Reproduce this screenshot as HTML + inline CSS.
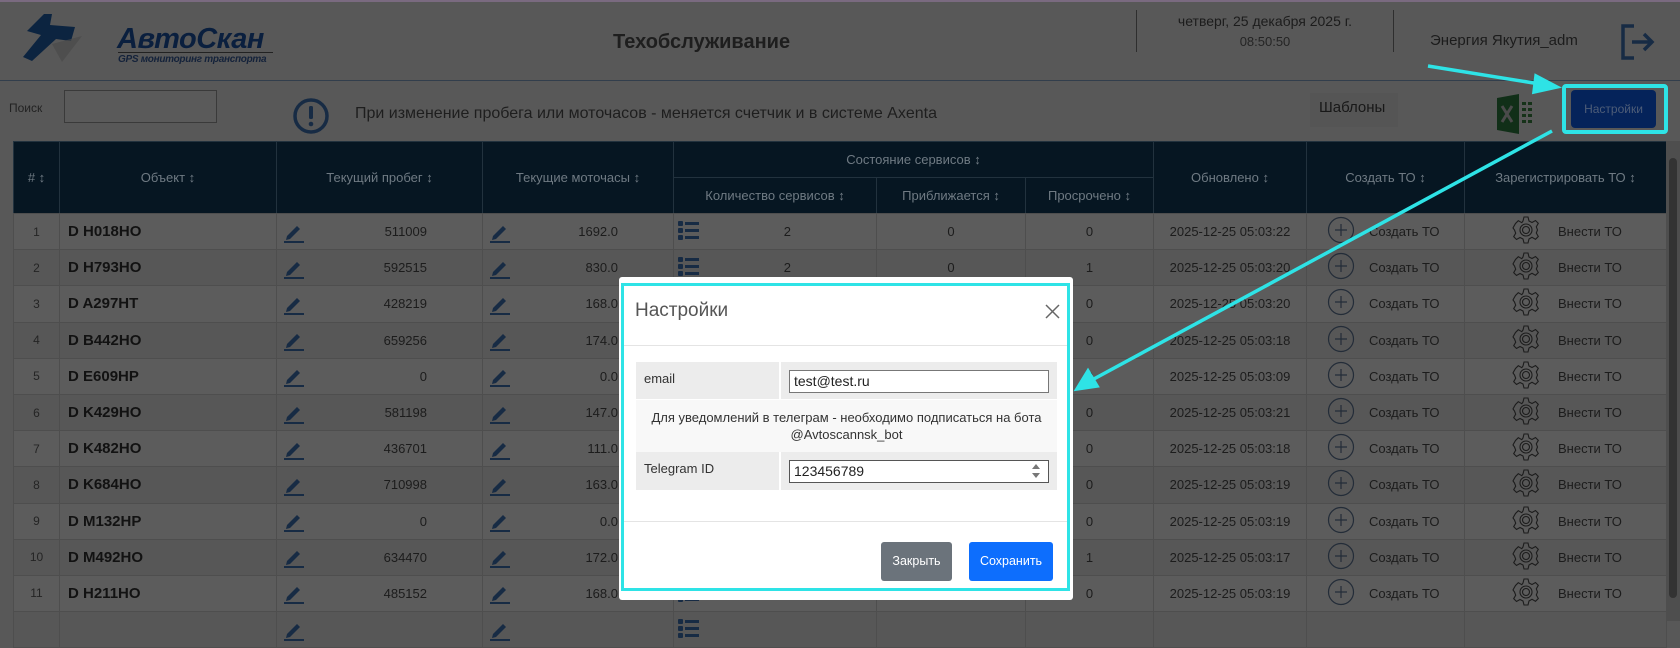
<!DOCTYPE html>
<html><head><meta charset="utf-8"><style>
*{box-sizing:border-box;margin:0;padding:0}
body{width:1680px;height:621px;overflow:hidden;background:#585858;font-family:"Liberation Sans","DejaVu Sans",sans-serif;position:relative;color:#1c1c1c}
.abs{position:absolute}
table{position:absolute;left:13px;top:141px;border-collapse:collapse;table-layout:fixed;width:1653px}
th{background:#061622;color:#6f7a83;font-weight:normal;font-size:13px;border:1px solid #22323e;height:36px}
td{height:36.2px;font-size:13px;border:1px solid #4e4e4e;color:#1c1c1c;text-align:center;white-space:nowrap;overflow:hidden}
tr.r:nth-child(odd) td{background:#5c5c5c}
tr.r:nth-child(even) td{background:#575757}
.nm{text-align:left;padding-left:8px;font-size:15px;font-weight:bold;color:#121212}
.num{text-align:left;padding-left:6px;position:relative}
.num span{position:absolute;right:55px;top:10px}
.pen{display:inline-block;vertical-align:middle}
</style></head><body>
<div class="abs" style="left:0;top:0;width:1680px;height:2px;background:#7a6a80"></div>
<svg class="abs" style="left:20px;top:12px" width="75" height="52" viewBox="0 0 75 52">
<path d="M24 2 L32 2 L30 13 L55 15 L51 29 L36 27 L12 49 L3 45 L21 23 L7 19 Z" fill="#0c2440"/>
<path d="M32 32 L62 24 L42 50 Z" fill="#4a4a4a" opacity=".7"/>
</svg>
<div class="abs" style="left:117px;top:23px;font-size:29px;font-weight:bold;font-style:italic;color:#0a1f3e;letter-spacing:-0.5px">АвтоСкан</div>
<div class="abs" style="left:118px;top:52px;width:155px;height:1px;background:#222"></div>
<div class="abs" style="left:118px;top:54px;font-size:10px;font-weight:bold;font-style:italic;color:#14223a;letter-spacing:-0.3px">GPS мониторинг транспорта</div>
<div class="abs" style="left:613px;top:31px;font-size:20px;font-weight:bold;color:#1e1e1e">Техобслуживание</div>
<div class="abs" style="left:1136px;top:10px;width:1px;height:42px;background:#2e2e2e"></div>
<div class="abs" style="left:1393px;top:10px;width:1px;height:42px;background:#2e2e2e"></div>
<div class="abs" style="left:1140px;top:13px;width:250px;text-align:center;font-size:14px;color:#1c1c1c">четверг, 25 декабря 2025 г.</div>
<div class="abs" style="left:1140px;top:34px;width:250px;text-align:center;font-size:13px;color:#242424">08:50:50</div>
<div class="abs" style="left:1430px;top:32px;font-size:15px;color:#1c1c1c">Энергия Якутия_adm</div>
<svg class="abs" style="left:1620px;top:24px" width="36" height="36" viewBox="0 0 36 36" fill="none" stroke="#172b44" stroke-width="3.5">
<path d="M14 2 H3 V34 H14"/><path d="M12 18 H32 M24 10 L32 18 L24 26"/></svg>
<div class="abs" style="left:0;top:80px;width:1680px;height:1px;background:#323e4c"></div>
<div class="abs" style="left:9px;top:101px;font-size:12px;color:#222">Поиск</div>
<div class="abs" style="left:64px;top:90px;width:153px;height:33px;border:1px solid #3a3a3a;background:#5a5a5a"></div>
<svg class="abs" style="left:292px;top:97px" width="38" height="38" viewBox="0 0 38 38"><circle cx="19" cy="19" r="16" fill="none" stroke="#172b44" stroke-width="3.5"/><rect x="17" y="9" width="4" height="13" rx="1.5" fill="#172b44"/><circle cx="19" cy="27" r="2.3" fill="#172b44"/></svg>
<div class="abs" style="left:355px;top:105px;font-size:16px;color:#1e1e1e">При изменение пробега или моточасов - меняется счетчик и в системе Axenta</div>
<div class="abs" style="left:1310px;top:93px;width:88px;height:34px;background:#555"></div>
<div class="abs" style="left:1319px;top:99px;font-size:15px;color:#181818">Шаблоны</div>
<svg class="abs" style="left:1497px;top:92px" width="42" height="44" viewBox="0 0 42 44"><path d="M0 6 L22 2 V42 L0 38 Z" fill="#112f18"/><path d="M5 14 L15 30 M15 14 L5 30" stroke="#4a4a4a" stroke-width="3"/><g fill="#163219"><rect x="25" y="10" width="4" height="3"/><rect x="31" y="10" width="4" height="3"/><rect x="25" y="16" width="4" height="3"/><rect x="31" y="16" width="4" height="3"/><rect x="25" y="22" width="4" height="3"/><rect x="31" y="22" width="4" height="3"/><rect x="25" y="28" width="4" height="3"/><rect x="31" y="28" width="4" height="3"/></g></svg>
<div class="abs" style="left:1562px;top:84px;width:106px;height:50px;border:4px solid #2ee3e6;border-radius:4px"></div>
<div class="abs" style="left:1571px;top:90px;width:85px;height:38px;background:#05235a;border-radius:4px;color:#4e5d78;font-size:12px;text-align:center;line-height:38px">Настройки</div>
<table>
<colgroup><col style="width:46px"><col style="width:217px"><col style="width:206px"><col style="width:191px"><col style="width:203px"><col style="width:149px"><col style="width:128px"><col style="width:153px"><col style="width:158px"><col style="width:202px"></colgroup>
<tr><th rowspan="2"># ↕</th><th rowspan="2">Объект ↕</th><th rowspan="2">Текущий пробег ↕</th><th rowspan="2">Текущие моточасы ↕</th><th colspan="3">Состояние сервисов ↕</th><th rowspan="2">Обновлено ↕</th><th rowspan="2">Создать ТО ↕</th><th rowspan="2">Зарегистрировать ТО ↕</th></tr>
<tr><th>Количество сервисов ↕</th><th>Приближается ↕</th><th>Просрочено ↕</th></tr>
</table>
<div id="rows"></div>
<script>
var d=[["D H018HO","511009","1692.0","2","0","0","05:03:22"],["D H793HO","592515","830.0","2","0","1","05:03:20"],["D A297HT","428219","168.0","2","0","0","05:03:20"],["D B442HO","659256","174.0","2","0","0","05:03:18"],["D E609HP","0","0.0","2","0","0","05:03:09"],["D K429HO","581198","147.0","2","0","0","05:03:21"],["D K482HO","436701","111.0","2","0","0","05:03:18"],["D K684HO","710998","163.0","2","0","0","05:03:19"],["D M132HP","0","0.0","2","0","0","05:03:19"],["D M492HO","634470","172.0","2","0","1","05:03:17"],["D H211HO","485152","168.0","2","0","0","05:03:19"],["","","","","","",""]];
var pen='<svg class="pen" width="22" height="22" viewBox="0 0 22 22"><path d="M4 15 L14 5 L17 8 L7 18 L3 19 Z" fill="#172b44"/><rect x="1" y="20" width="20" height="2" fill="#172b44"/></svg>';
var lst='<svg width="22" height="22" viewBox="0 0 22 22" fill="#172b44"><rect x="0" y="1" width="5" height="5" rx="1"/><rect x="0" y="8" width="5" height="5" rx="1"/><rect x="0" y="15" width="5" height="5" rx="1"/><rect x="7" y="2" width="14" height="3"/><rect x="7" y="9" width="14" height="3"/><rect x="7" y="16" width="14" height="3"/></svg>';
var pl='<svg width="28" height="28" viewBox="0 0 28 28" fill="none" stroke="#232c38" stroke-width="1.2"><circle cx="14" cy="14" r="12.5"/><path d="M14 8 V20 M8 14 H20"/></svg>';
var gr='<svg width="28" height="28" viewBox="0 0 28 28" fill="none" stroke="#1c1c1c" stroke-width="1.1"><path d="M12 1h4l1 4 3 1.5 3.5-2 2.8 2.8-2 3.5L25.5 14l-1.2 3 2 3.5-2.8 2.8-3.5-2L17 23l-1 4h-4l-1-4-3-1.5-3.5 2-2.8-2.8 2-3.5L2.5 14 1 12l.5-1 2-3.5L6.3 4.7l3.5 2L11 5z"/><circle cx="14" cy="14" r="6"/><circle cx="14" cy="14" r="3.5"/></svg>';
var h='<table style="top:213px"><colgroup><col style="width:46px"><col style="width:217px"><col style="width:206px"><col style="width:191px"><col style="width:203px"><col style="width:149px"><col style="width:128px"><col style="width:153px"><col style="width:158px"><col style="width:202px"></colgroup>';
d.forEach(function(r,i){var e=r[0]==="";h+='<tr class="r"><td style="color:#242424;font-size:12px">'+(e?'':i+1)+'</td><td class="nm">'+r[0]+'</td><td class="num">'+pen+'<span>'+r[1]+'</span></td><td class="num">'+pen+'<span>'+r[2]+'</span></td><td class="num"><span style="left:4px;top:6px;right:auto">'+lst+'</span><span style="right:85px">'+r[3]+'</span></td><td>'+r[4]+'</td><td>'+r[5]+'</td><td>'+(e?'':'2025-12-25 '+r[6])+'</td><td style="text-align:left;padding-left:20px">'+(e?'':'<span style="display:inline-block;vertical-align:middle">'+pl+'</span><span style="margin-left:14px;vertical-align:middle">Создать ТО</span>')+'</td><td style="text-align:left;padding-left:47px">'+(e?'':'<span style="display:inline-block;vertical-align:middle">'+gr+'</span><span style="margin-left:18px;vertical-align:middle">Внести ТО</span>')+'</td></tr>';});
document.getElementById('rows').innerHTML=h+'</table>';
</script>
<div class="abs" style="left:1666px;top:141px;width:14px;height:480px;background:#4e4e4e"></div>
<div class="abs" style="left:1669px;top:158px;width:8px;height:440px;background:#333;border-radius:4px"></div>
<svg class="abs" style="left:0;top:0" width="1680" height="621">
<g stroke="#2ee3e6" stroke-width="3.5" fill="#2ee3e6">
<line x1="1428" y1="66" x2="1540" y2="84"/><path d="M1557 87 L1536 76 L1534 92 Z"/>
<line x1="1552" y1="131" x2="1092" y2="380"/><path d="M1077 389 L1088 371 L1097 386 Z"/>
</g></svg>
<div class="abs" style="left:619px;top:277px;width:454px;height:323px;background:#fff;border-radius:3px"></div>
<div class="abs" style="left:621px;top:283px;width:449px;height:308px;border:3px solid #2ee3e6"></div>
<div class="abs" style="left:635px;top:300px;font-size:19px;color:#555">Настройки</div>
<svg class="abs" style="left:1045px;top:304px" width="15" height="15" viewBox="0 0 15 15"><path d="M1 1 L14 14 M14 1 L1 14" stroke="#666" stroke-width="1.5"/></svg>
<div class="abs" style="left:624px;top:345px;width:443px;height:1px;background:#e4e4e4"></div>
<div class="abs" style="left:636px;top:362px;width:143px;height:37px;background:#ececec"></div>
<div class="abs" style="left:781px;top:362px;width:276px;height:37px;background:#ececec"></div>
<div class="abs" style="left:644px;top:371px;font-size:13px;color:#333">email</div>
<div class="abs" style="left:789px;top:370px;width:260px;height:23px;border:1px solid #777;background:#fff;font-size:14px;padding:2px 4px;color:#222">test@test.ru</div>
<div class="abs" style="left:636px;top:400px;width:421px;height:52px;background:#f8f8f8;text-align:center;font-size:13px;color:#333;line-height:17px;padding-top:9px">Для уведомлений в телеграм - необходимо подписаться на бота<br>@Avtoscannsk_bot</div>
<div class="abs" style="left:636px;top:452px;width:143px;height:38px;background:#ececec"></div>
<div class="abs" style="left:781px;top:452px;width:276px;height:38px;background:#ececec"></div>
<div class="abs" style="left:644px;top:461px;font-size:13px;color:#333">Telegram ID</div>
<div class="abs" style="left:789px;top:460px;width:260px;height:23px;border:1px solid #555;background:#fff;font-size:14px;padding:2px 4px;color:#222">123456789</div>
<svg class="abs" style="left:1031px;top:463px" width="10" height="16" viewBox="0 0 10 16"><path d="M1 6 L5 1 L9 6 Z M1 10 L5 15 L9 10 Z" fill="#777"/></svg>
<div class="abs" style="left:624px;top:521px;width:443px;height:1px;background:#e4e4e4"></div>
<div class="abs" style="left:881px;top:542px;width:71px;height:39px;background:#6b737b;border-radius:3px;color:#fff;font-size:12.5px;text-align:center;line-height:39px">Закрыть</div>
<div class="abs" style="left:969px;top:542px;width:84px;height:39px;background:#0d6efd;border-radius:3px;color:#fff;font-size:12.5px;text-align:center;line-height:39px">Сохранить</div>
</body></html>
